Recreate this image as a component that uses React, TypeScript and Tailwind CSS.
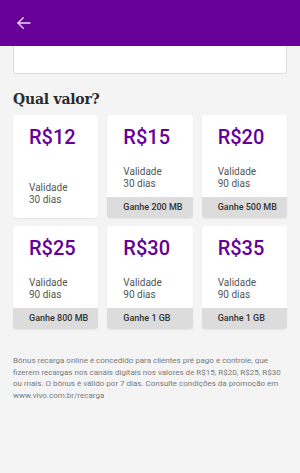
import React from 'react';

interface Plan {
  price: string;
  validade: string;
  bonus?: string;
}

const plans: Plan[] = [
  { price: 'R$12', validade: '30 dias' },
  { price: 'R$15', validade: '30 dias', bonus: 'Ganhe 200 MB' },
  { price: 'R$20', validade: '90 dias', bonus: 'Ganhe 500 MB' },
  { price: 'R$25', validade: '90 dias', bonus: 'Ganhe 800 MB' },
  { price: 'R$30', validade: '90 dias', bonus: 'Ganhe 1 GB' },
  { price: 'R$35', validade: '90 dias', bonus: 'Ganhe 1 GB' },
];

function PlanCard({ plan }: { plan: Plan }) {
  return (
    <div className="flex h-[103px] flex-col overflow-hidden rounded-[3px] bg-white shadow-[0_1px_2px_rgba(0,0,0,0.06)]">
      <div className="pl-4 pt-[10px] text-[20px] font-medium leading-[24px] text-[#660099]">
        {plan.price}
      </div>
      <div className={plan.bonus ? 'mt-[17px] pl-4' : 'mt-auto pb-[13px] pl-4'}>
        <div className="text-[10px] leading-[11.5px] text-[#555]">Validade</div>
        <div className="text-[10px] leading-[11.5px] text-[#555]">{plan.validade}</div>
      </div>
      {plan.bonus && (
        <div className="mt-auto flex h-[21px] items-center bg-[#dcdcdc] pl-4 text-[9px] font-medium text-[#333]">
          {plan.bonus}
        </div>
      )}
    </div>
  );
}

export default function App() {
  return (
    <div className="min-h-[473px] w-[300px] bg-[#f4f4f4] font-['Roboto',sans-serif]">
      <div className="flex h-[46px] items-center bg-[#660099] pl-[15px]">
        <svg width="18" height="18" viewBox="0 0 24 24" fill="none" stroke="#e9d8f2" strokeWidth={1.8} strokeLinecap="round" strokeLinejoin="round">
          <path d="M20 12H4" />
          <path d="M11 5l-7 7 7 7" />
        </svg>
      </div>

      <div className="mx-[13px] h-[28px] rounded-b-[3px] border border-t-0 border-[#dcdcdc] bg-white" />

      <h2 className="mx-[13px] mt-[15px] font-['DejaVu_Serif_Condensed','DejaVu_Serif',serif] text-[15.5px] font-bold leading-[20px] tracking-[-0.2px] text-[#2a2a2a]">
        Qual valor?
      </h2>

      <div className="mx-[13px] mt-[6px] grid grid-cols-3 gap-x-[9px] gap-y-[8px]">
        {plans.map((plan) => (
          <PlanCard key={plan.price} plan={plan} />
        ))}
      </div>

      <p className="mx-[13px] mt-[26px] text-[8px] leading-[11.5px] text-[#7a7a7a]">
        Bônus recarga online é concedido para clientes pré pago e controle, que fizerem recargas nos canais digitais nos valores de R$15, R$20, R$25, R$30 ou mais. O bônus é válido por 7 dias. Consulte condições da promoção em www.vivo.com.br/recarga
      </p>
    </div>
  );
}
